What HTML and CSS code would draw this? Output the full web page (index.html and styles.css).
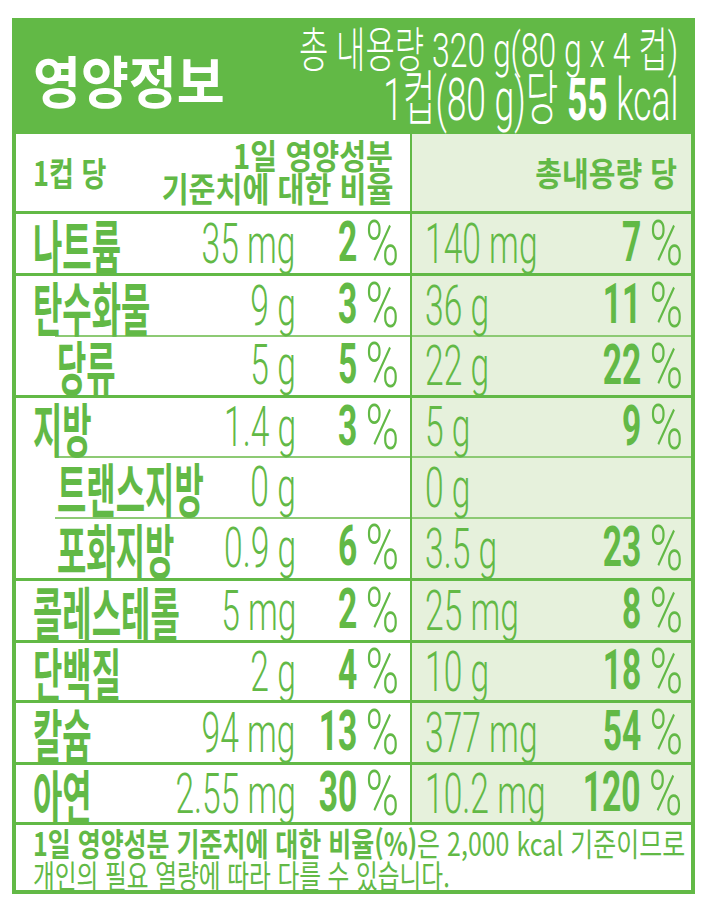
FILE: index.html
```html
<!DOCTYPE html>
<html lang="ko">
<head>
<meta charset="utf-8">
<title>영양정보</title>
<link rel="stylesheet" href="styles.css">
</head>
<body>
<div class="label">
  <div class="head">
    <div class="title"><span class="sx-l">영양정보</span></div>
    <div class="totals">
      <div class="t1"><span class="sx-r">총 내용량 320 g(80 g x 4 컵)</span></div>
      <div class="t2"><span class="sx-r">1컵(80 g)당 <b>55</b> kcal</span></div>
    </div>
  </div>

  <div class="row colhead">
    <div class="lc">
      <div class="ch-left"><span class="sx-l">1컵 당</span></div>
      <div class="ch-mid">
        <span class="sx-r">1일 영양성분</span>
        <span class="sx-r">기준치에 대한 비율</span>
      </div>
    </div>
    <div class="rc">
      <div class="ch-right"><span class="sx-r">총내용량 당</span></div>
    </div>
  </div>

  <div class="row main h62">
    <div class="lc"><div class="nm"><span class="sx-l">나트륨</span></div><div class="amt"><span class="sx-r">35 mg</span></div><div class="pct"><span class="sx-r"><b>2</b> <span class="pc">%</span></span></div></div>
    <div class="rc"><div class="ramt"><span class="sx-l">140 mg</span></div><div class="rpct"><span class="sx-r"><b>7</b> <span class="pc">%</span></span></div></div>
  </div>
  <div class="row main h62">
    <div class="lc"><div class="nm"><span class="sx-l">탄수화물</span></div><div class="amt"><span class="sx-r">9 g</span></div><div class="pct"><span class="sx-r"><b>3</b> <span class="pc">%</span></span></div></div>
    <div class="rc"><div class="ramt"><span class="sx-l">36 g</span></div><div class="rpct"><span class="sx-r"><b>11</b> <span class="pc">%</span></span></div></div>
  </div>
  <div class="row sub h60">
    <div class="lc"><div class="nm"><span class="sx-l">당류</span></div><div class="amt"><span class="sx-r">5 g</span></div><div class="pct"><span class="sx-r"><b>5</b> <span class="pc">%</span></span></div></div>
    <div class="rc"><div class="ramt"><span class="sx-l">22 g</span></div><div class="rpct"><span class="sx-r"><b>22</b> <span class="pc">%</span></span></div></div>
  </div>
  <div class="row main h61">
    <div class="lc"><div class="nm"><span class="sx-l">지방</span></div><div class="amt"><span class="sx-r">1.4 g</span></div><div class="pct"><span class="sx-r"><b>3</b> <span class="pc">%</span></span></div></div>
    <div class="rc"><div class="ramt"><span class="sx-l">5 g</span></div><div class="rpct"><span class="sx-r"><b>9</b> <span class="pc">%</span></span></div></div>
  </div>
  <div class="row sub h61">
    <div class="lc"><div class="nm"><span class="sx-l">트랜스지방</span></div><div class="amt"><span class="sx-r">0 g</span></div><div class="pct"></div></div>
    <div class="rc"><div class="ramt"><span class="sx-l">0 g</span></div><div class="rpct"></div></div>
  </div>
  <div class="row sub h61">
    <div class="lc"><div class="nm"><span class="sx-l">포화지방</span></div><div class="amt"><span class="sx-r">0.9 g</span></div><div class="pct"><span class="sx-r"><b>6</b> <span class="pc">%</span></span></div></div>
    <div class="rc"><div class="ramt"><span class="sx-l">3.5 g</span></div><div class="rpct"><span class="sx-r"><b>23</b> <span class="pc">%</span></span></div></div>
  </div>
  <div class="row main h62">
    <div class="lc"><div class="nm"><span class="sx-l">콜레스테롤</span></div><div class="amt"><span class="sx-r">5 mg</span></div><div class="pct"><span class="sx-r"><b>2</b> <span class="pc">%</span></span></div></div>
    <div class="rc"><div class="ramt"><span class="sx-l">25 mg</span></div><div class="rpct"><span class="sx-r"><b>8</b> <span class="pc">%</span></span></div></div>
  </div>
  <div class="row main h60">
    <div class="lc"><div class="nm"><span class="sx-l">단백질</span></div><div class="amt"><span class="sx-r">2 g</span></div><div class="pct"><span class="sx-r"><b>4</b> <span class="pc">%</span></span></div></div>
    <div class="rc"><div class="ramt"><span class="sx-l">10 g</span></div><div class="rpct"><span class="sx-r"><b>18</b> <span class="pc">%</span></span></div></div>
  </div>
  <div class="row main h62">
    <div class="lc"><div class="nm"><span class="sx-l">칼슘</span></div><div class="amt"><span class="sx-r">94 mg</span></div><div class="pct"><span class="sx-r"><b>13</b> <span class="pc">%</span></span></div></div>
    <div class="rc"><div class="ramt"><span class="sx-l">377 mg</span></div><div class="rpct"><span class="sx-r"><b>54</b> <span class="pc">%</span></span></div></div>
  </div>
  <div class="row main h60">
    <div class="lc"><div class="nm"><span class="sx-l">아연</span></div><div class="amt"><span class="sx-r">2.55 mg</span></div><div class="pct"><span class="sx-r"><b>30</b> <span class="pc">%</span></span></div></div>
    <div class="rc"><div class="ramt"><span class="sx-l">10.2 mg</span></div><div class="rpct"><span class="sx-r"><b>120</b> <span class="pc">%</span></span></div></div>
  </div>

  <div class="foot">
    <div class="fl fl1"><span class="sx-l"><b>1일 영양성분 기준치에 대한 비율(%)</b>은 2,000 kcal 기준이므로</span></div>
    <div class="fl fl2"><span class="sx-l">개인의 필요 열량에 따라 다를 수 있습니다.</span></div>
  </div>
</div>
</body>
</html>
```

FILE: styles.css
```css
* { box-sizing: border-box; }

html, body { overflow: hidden; }

body {
  margin: 0;
  background: #fff;
  color: #62b946;
  font-family: "Noto Sans CJK KR", "Noto Sans", sans-serif;
}

b { font-weight: 700; }

.sx-l, .sx-r {
  display: inline-block;
  white-space: nowrap;
}
.sx-l { transform-origin: left center; }
.sx-r { transform-origin: right center; }

.label {
  margin: 18px 0 0 12px;
  width: 683px;
  height: 876px;
  border: 4px solid #62b946;
  display: flex;
  flex-direction: column;
}

/* header */
.head {
  flex: 0 0 112px;
  height: 112px;
  background: #62b946;
  color: #fff;
  display: flex;
  align-items: center;
  padding: 0 13px 0 17px;
}
.title {
  flex: 0 0 auto;
  font-size: 56px;
  font-weight: 700;
  line-height: 1;
  margin-top: 2px;
}
.title .sx-l { transform: scaleX(.93); }

.totals {
  flex: 1 1 0;
  min-width: 0;
  display: flex;
  flex-direction: column;
  align-items: stretch;
  font-family: Roboto, "Noto Sans CJK KR", sans-serif;
  font-weight: 300;
}
.t1, .t2 { display: flex; justify-content: flex-end; min-width: 0; }
.t1 { font-size: 48px; line-height: 46px; margin-top: -2px; }
.t1 .sx-r { transform: scaleX(.665); }
.t2 { font-size: 60px; line-height: 52px; }
.t2 .sx-r { transform: scaleX(.59); }
.t2 b { font-weight: 700; }

/* rows */
.row {
  display: flex;
  flex: 0 0 auto;
}
.row.main { border-top: 3px solid #62b946; }
.h62 { height: 62px; }
.h61 { height: 61px; }
.h60 { height: 60px; }

.lc {
  width: 396px;
  flex: 0 0 396px;
  min-width: 0;
  border-right: 2px solid #62b946;
  display: flex;
  align-items: center;
  padding: 0 17px;
}
.rc {
  flex: 1 1 0;
  min-width: 0;
  background: #e6f1dc;
  display: flex;
  align-items: center;
  padding: 0 14px 0 13px;
}

.row.sub .lc {
  padding-left: 41px;
  background: linear-gradient(#8dca74, #8dca74) no-repeat 39px 0 / 100% 2px;
}
.row.sub .rc { border-top: 2px solid #8dca74; }

/* column header */
.colhead { height: 77px; }
.ch-left, .ch-right {
  font-size: 33px;
  font-weight: 700;
  line-height: 1;
  min-width: 0;
}
.ch-left { flex: 1 1 0; }
.ch-left .sx-l { transform: scaleX(.82); }
.ch-right { flex: 1 1 0; display: flex; justify-content: flex-end; }
.ch-right .sx-r { transform: scaleX(.88); }
.ch-mid {
  flex: 0 0 auto;
  display: flex;
  flex-direction: column;
  align-items: flex-end;
  font-size: 34px;
  font-weight: 700;
  line-height: 33px;
  margin-top: -4px;
}
.ch-mid .sx-r { transform: scaleX(.86); }

/* data cells */
.nm {
  flex: 1 1 0;
  min-width: 0;
  font-size: 58px;
  font-weight: 700;
  line-height: 1;
}
.nm .sx-l { transform: scaleX(.55); }

.amt, .pct, .ramt, .rpct {
  font-family: Roboto, "Noto Sans CJK KR", sans-serif;
  font-weight: 300;
  font-size: 56px;
  line-height: 1;
  display: flex;
  min-width: 0;
}
.amt { flex: 0 0 160px; justify-content: flex-end; }
.pct { flex: 0 0 97px; justify-content: flex-end; }
.amt .sx-r { transform: scaleX(.6); }
.pct .sx-r, .rpct .sx-r { transform: scaleX(.6); }
.pct b, .rpct b { font-weight: 700; }
.pc {
  display: inline-block;
  font-size: 63px;
  transform: scaleX(1.2);
  transform-origin: left center;
  vertical-align: -4px;
}

.ramt { flex: 1 1 0; justify-content: flex-start; }
.ramt .sx-l { transform: scaleX(.6); }
.rpct { flex: 1 1 0; justify-content: flex-end; }

/* footnote */
.foot {
  flex: 1 1 0;
  min-height: 0;
  border-top: 3px solid #62b946;
  padding: 1px 17px 0;
  font-size: 32px;
  line-height: 32px;
  font-weight: 400;
}
.fl1 .sx-l { transform: scaleX(.78); }
.fl2 .sx-l { transform: scaleX(.74); }
```
